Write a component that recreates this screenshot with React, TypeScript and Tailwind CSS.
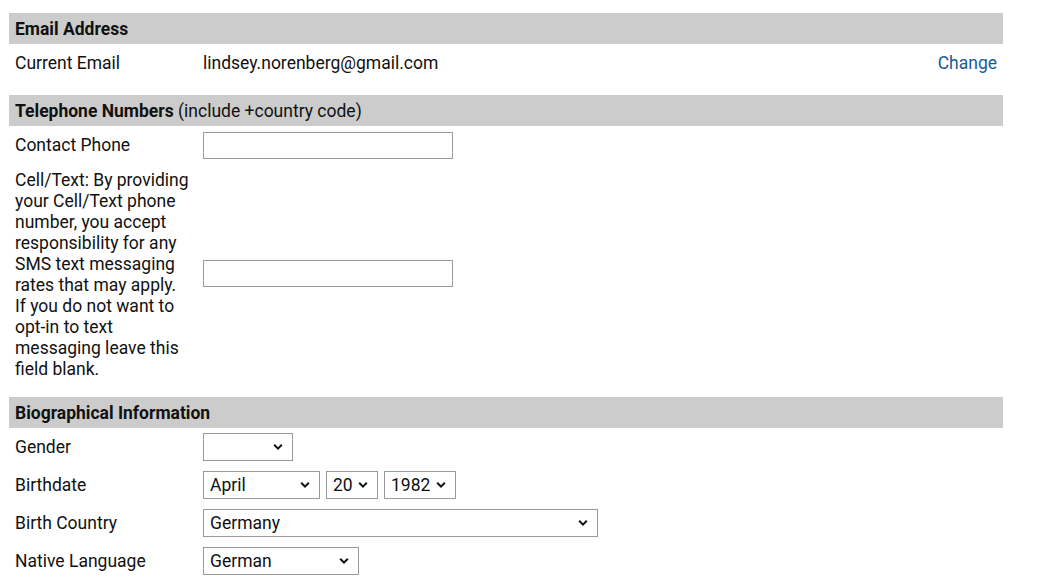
import type { ReactNode } from 'react';

// small chevron used in place of the native select arrow
function Chevron() {
  return (
    <svg
      className="pointer-events-none absolute right-[10px] top-1/2 -translate-y-1/2 w-[10px] h-[7px]"
      viewBox="0 0 10 7"
      fill="none"
      stroke="#111"
      strokeWidth={2}
    >
      <path d="M1.2 1.3l3.8 3.8 3.8-3.8" />
    </svg>
  );
}

function Select({ value, width }: { value: string; width: string }) {
  return (
    <div className={`relative h-[28px] ${width}`}>
      <select
        defaultValue={value}
        className="appearance-none w-full h-full border border-[#9a9a9a] bg-white pl-[6px] pr-6 text-[17.5px] text-[#111] outline-none rounded-none"
      >
        <option value={value}>{value}</option>
      </select>
      <Chevron />
    </div>
  );
}

function SectionHeader({ children }: { children: ReactNode }) {
  return (
    <div className="h-[31px] bg-[#cccccc] flex items-center px-[6px] pt-[1px] text-[#111]">
      {children}
    </div>
  );
}

function Row({ label, children, className = 'h-[38px] items-center' }: { label: ReactNode; children?: ReactNode; className?: string }) {
  return (
    <div className={`flex ${className}`}>
      <div className="w-[194px] shrink-0 pl-[6px] pr-[12px]">{label}</div>
      <div className="flex-1 flex items-center">{children}</div>
    </div>
  );
}

export default function App() {
  return (
    <div
      className="min-h-screen bg-white pt-[13px] pl-[9px] text-[17.5px] leading-[21px] text-[#111]"
      style={{ fontFamily: 'Roboto, "Liberation Sans", sans-serif' }}
    >
      <div className="w-[994px]">
        {/* Email */}
        <SectionHeader>
          <span className="font-bold">Email Address</span>
        </SectionHeader>
        <Row label="Current Email">
          <span className="flex-1">lindsey.norenberg@gmail.com</span>
          <a href="#" className="text-[#1a5a96] pr-[6px]">
            Change
          </a>
        </Row>

        {/* Phones */}
        <div className="mt-[13px]">
          <SectionHeader>
            <span className="font-bold">Telephone Numbers</span>
            <span>&nbsp;(include +country code)</span>
          </SectionHeader>
          <Row label="Contact Phone">
            <input type="text" className="w-[250px] h-[27px] border border-[#9a9a9a] outline-none" />
          </Row>
          <Row
            className="pt-[6px] pb-[17px] items-center"
            label={
              <p>
                Cell/Text: By providing your Cell/Text phone number, you accept responsibility for any SMS text
                messaging rates that may apply. If you do not want to opt-in to text messaging leave this field
                blank.
              </p>
            }
          >
            <input type="text" className="w-[250px] h-[27px] border border-[#9a9a9a] outline-none mt-[-3px]" />
          </Row>
        </div>

        {/* Bio */}
        <SectionHeader>
          <span className="font-bold">Biographical Information</span>
        </SectionHeader>
        <Row label="Gender">
          <Select value="" width="w-[90px]" />
        </Row>
        <Row label="Birthdate">
          <div className="flex gap-[6px]">
            <Select value="April" width="w-[117px]" />
            <Select value="20" width="w-[52px]" />
            <Select value="1982" width="w-[72px]" />
          </div>
        </Row>
        <Row label="Birth Country">
          <Select value="Germany" width="w-[395px]" />
        </Row>
        <Row label="Native Language">
          <Select value="German" width="w-[156px]" />
        </Row>
      </div>
    </div>
  );
}
